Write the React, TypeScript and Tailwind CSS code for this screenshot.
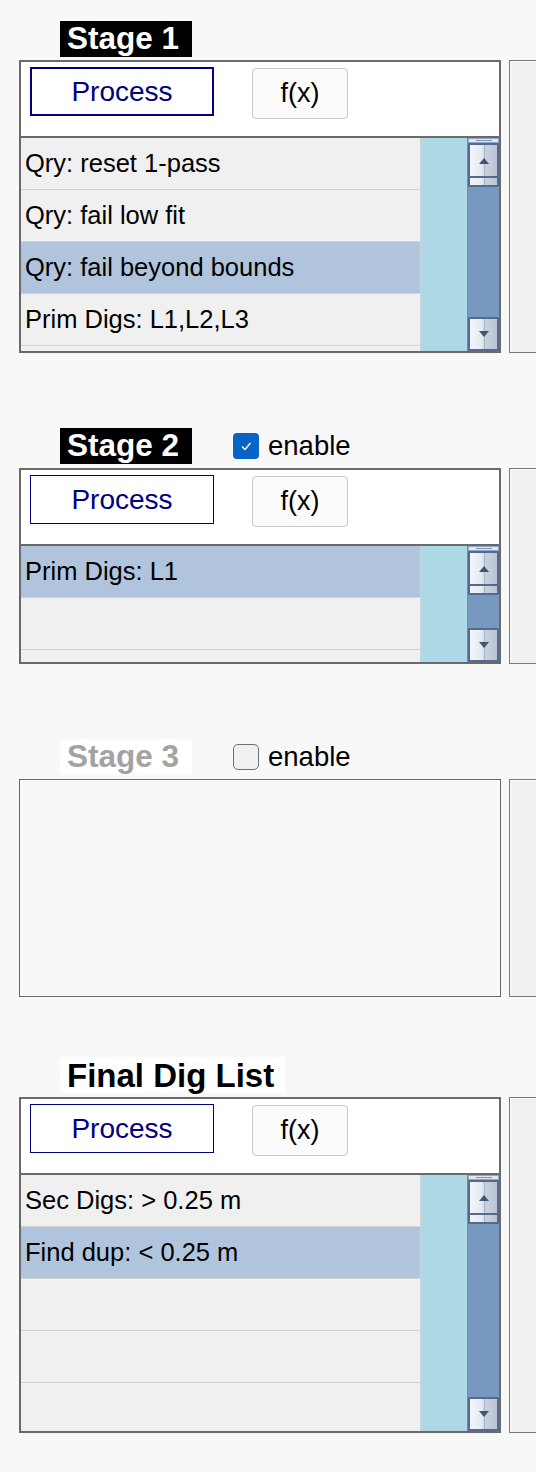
import React from 'react'

const FONT = { fontFamily: '"Liberation Sans", Arial, sans-serif' }

interface Row {
  text: string
  selected?: boolean
}

function ScrollBar() {
  return (
    <div className="w-[32px] flex flex-col bg-[#7899bf] border-l border-[#6d8db3]">
      <div className="h-[5px] bg-[#dfe8f2] border border-[#8ea6c4] flex items-center justify-center">
        <div className="w-[16px] h-px bg-[#7a95bb]" />
      </div>
      <div className="h-[35px] border-2 border-[#56698e] flex items-center justify-center bg-[linear-gradient(to_right,#f4f6fa,#e4e9f1_45%,#c9d2df_55%,#b9c4d4)] relative">
        <div className="absolute left-1/2 top-0 bottom-0 w-px bg-[#a9b4c6]" />
        <svg width="10" height="6" viewBox="0 0 10 6" className="relative">
          <path d="M5 0 L10 6 L0 6 Z" fill="#46546f" />
        </svg>
      </div>
      <div className="h-[9px] border-x-2 border-b-2 border-[#56698e] bg-[linear-gradient(to_right,#f4f6fa,#e4e9f1_45%,#c9d2df_55%,#b9c4d4)] relative">
        <div className="absolute left-1/2 top-0 bottom-0 w-px bg-[#a9b4c6]" />
      </div>
      <div className="flex-1" />
      <div className="h-[34px] border-2 border-[#56698e] flex items-center justify-center bg-[linear-gradient(to_right,#f4f6fa,#e4e9f1_45%,#c9d2df_55%,#b9c4d4)] relative">
        <div className="absolute left-1/2 top-0 bottom-0 w-px bg-[#a9b4c6]" />
        <svg width="10" height="6" viewBox="0 0 10 6" className="relative">
          <path d="M0 0 L10 0 L5 6 Z" fill="#46546f" />
        </svg>
      </div>
    </div>
  )
}

function StagePanel({ rows, listHeight, focused }: { rows: Row[]; listHeight: number; focused?: boolean }) {
  return (
    <div className="w-[482px] shrink-0 border-2 border-[#6a6a6a] bg-white flex flex-col">
      <div className="h-[74px] flex items-start pl-[9px] pt-[5px] gap-[38px]">
        <button
          className={`w-[184px] h-[49px] bg-white text-[#000080] text-[28px] ${focused ? 'border-2' : 'border'} border-[#000080]`}
        >
          Process
        </button>
        <button className="w-[96px] h-[51px] mt-px rounded-[4px] border border-[#cacaca] bg-[#fbfbfb] text-black text-[27px]">
          f(x)
        </button>
      </div>
      <div className="h-[2px] bg-[#6a6a6a]" />
      <div className="flex overflow-hidden" style={{ height: listHeight }}>
        <div className="w-[399px] bg-[#f0f0f0] flex flex-col">
          {rows.map((r, i) => (
            <div
              key={i}
              className={`h-[52px] shrink-0 border-b border-[#d4d4d4] flex items-center pl-[4px] text-[25.5px] text-black ${r.selected ? 'bg-[#b0c4de]' : ''}`}
            >
              {r.text}
            </div>
          ))}
        </div>
        <div className="w-[47px] bg-[#add8e6] border-l border-[#c8d4d8]" />
        <ScrollBar />
      </div>
    </div>
  )
}

function SidePanel({ height }: { height: number }) {
  return (
    <div className="w-[120px] shrink-0 border border-[#7a7a7a] bg-[#f0f0f0]" style={{ height }}>
      <div className="h-full border-l border-t border-white" />
    </div>
  )
}

function Label({ text, dark, dim, big }: { text: string; dark?: boolean; dim?: boolean; big?: boolean }) {
  return (
    <div
      className={`h-[36px] pl-[7px] pr-[11px] flex items-center font-bold leading-none whitespace-nowrap ${big ? 'text-[33px]' : 'w-[132px] text-[31.5px]'} ${
        dark ? 'bg-black text-white' : dim ? 'bg-white text-[#a3a3a3]' : 'bg-white text-black'
      }`}
    >
      {text}
    </div>
  )
}

function Enable({ checked }: { checked: boolean }) {
  return (
    <div className="flex items-center gap-[9px] ml-[41px]">
      {checked ? (
        <div className="w-[26px] h-[26px] rounded-[4px] bg-[#0863c6] flex items-center justify-center">
          <svg width="14" height="14" viewBox="0 0 14 14">
            <path d="M3 7.5 L6 10.5 L11.5 4" stroke="white" strokeWidth="1.4" fill="none" />
          </svg>
        </div>
      ) : (
        <div className="w-[26px] h-[26px] rounded-[5px] bg-[#f0f0f0] border-[1.5px] border-[#6f6f6f]" />
      )}
      <span className="text-[27.5px] text-black">enable</span>
    </div>
  )
}

export default function App() {
  return (
    <div className="w-[536px] h-[1472px] bg-[#f8f8f8] overflow-hidden pl-[19px] pt-[21px]" style={FONT}>
      {/* Stage 1 */}
      <div className="ml-[41px] flex items-center h-[36px]">
        <Label text="Stage 1" dark />
      </div>
      <div className="flex gap-[8px] mt-[3px]">
        <StagePanel
          focused
          listHeight={213}
          rows={[
            { text: 'Qry: reset 1-pass' },
            { text: 'Qry: fail low fit' },
            { text: 'Qry: fail beyond bounds', selected: true },
            { text: 'Prim Digs: L1,L2,L3' },
            { text: '' },
          ]}
        />
        <SidePanel height={293} />
      </div>

      {/* Stage 2 */}
      <div className="ml-[41px] flex items-center h-[36px] mt-[75px]">
        <Label text="Stage 2" dark />
        <Enable checked />
      </div>
      <div className="flex gap-[8px] mt-[4px]">
        <StagePanel
          listHeight={116}
          rows={[{ text: 'Prim Digs: L1', selected: true }, { text: '' }, { text: '' }]}
        />
        <SidePanel height={196} />
      </div>

      {/* Stage 3 */}
      <div className="ml-[41px] flex items-center h-[36px] mt-[75px]">
        <Label text="Stage 3" dim />
        <Enable checked={false} />
      </div>
      <div className="flex gap-[8px] mt-[4px]">
        <div className="w-[482px] h-[218px] shrink-0 border border-[#6a6a6a] bg-[#f8f8f8]" />
        <SidePanel height={218} />
      </div>

      {/* Final Dig List */}
      <div className="ml-[41px] flex items-center h-[36px] mt-[60px]">
        <Label text="Final Dig List" big />
      </div>
      <div className="flex gap-[8px] mt-[4px]">
        <StagePanel
          listHeight={256}
          rows={[
            { text: 'Sec Digs: > 0.25 m' },
            { text: 'Find dup: < 0.25 m', selected: true },
            { text: '' },
            { text: '' },
            { text: '' },
          ]}
        />
        <SidePanel height={336} />
      </div>
    </div>
  )
}
